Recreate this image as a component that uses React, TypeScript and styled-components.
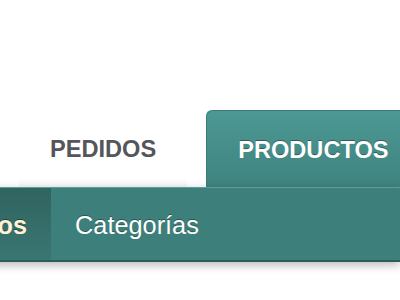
import React from "react";
import styled, { createGlobalStyle } from "styled-components";

const Global = createGlobalStyle`
  html, body { margin: 0; padding: 0; background: #ffffff; overflow: hidden; }
  body { width: 400px; height: 300px; font-family: "Liberation Sans", Arial, Helvetica, sans-serif; }
`;

const Page = styled.div`
  width: 400px;
  height: 300px;
  display: flex;
  flex-direction: column;
  padding-top: 110px;
  box-sizing: border-box;
  overflow: hidden;
`;

const Tabs = styled.div`
  display: flex;
  gap: 19px;
  padding-left: 19px;
  height: 77px;
  flex-shrink: 0;
`;

const Tab = styled.div<{ $active?: boolean }>`
  flex-shrink: 0;
  display: flex;
  align-items: center;
  padding: 2px 31px 0;
  box-sizing: border-box;
  font-weight: bold;
  font-size: 23.6px;
  border-radius: 6px 6px 0 0;
  ${(p) =>
    p.$active
      ? `
    color: #ffffff;
    background: linear-gradient(#4c9894, #3f837f);
    border-top: 1px solid #3d7a76;
    border-left: 1px solid #3d7a76;
    text-shadow: 0 -1px 0 rgba(0,0,0,0.35);
  `
      : `
    color: #55555c;
    background: linear-gradient(#ffffff 88%, #f6f6f6);
    text-shadow: 0 1px 0 #ffffff;
  `}
`;

const SubBar = styled.div`
  height: 75px;
  flex-shrink: 0;
  display: flex;
  background: #3d7f7b;
  border-top: 1px solid #5e9e9a;
  border-bottom: 2px solid #2d5d59;
  box-shadow: 0 3px 9px rgba(0, 0, 0, 0.28);
  box-sizing: border-box;
  margin-left: -122px;
`;

const SubItem = styled.div<{ $active?: boolean }>`
  display: flex;
  align-items: center;
  padding: 3px 24px 0;
  font-size: 25.3px;
  ${(p) =>
    p.$active
      ? `
    font-weight: bold;
    color: #fdf3d4;
    background: linear-gradient(#30645f, #3a7672);
    text-shadow: 0 -1px 0 rgba(0,0,0,0.4);
  `
      : `
    color: #ffffff;
    text-shadow: 0 -1px 0 rgba(0,0,0,0.35);
  `}
`;

export default function App() {
  return (
    <>
      <Global />
      <Page>
        <Tabs>
          <Tab>PEDIDOS</Tab>
          <Tab $active>PRODUCTOS</Tab>
        </Tabs>
        <SubBar>
          <SubItem $active>Productos</SubItem>
          <SubItem>Categorías</SubItem>
        </SubBar>
      </Page>
    </>
  );
}
